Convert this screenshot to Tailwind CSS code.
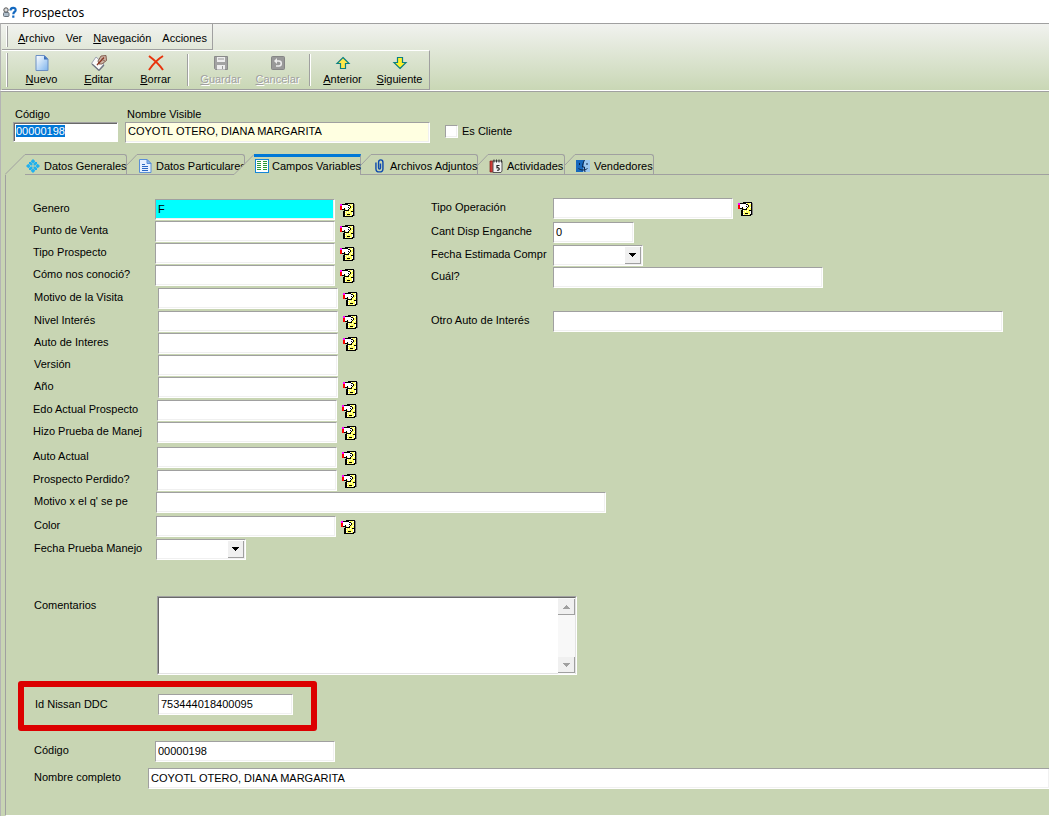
<!DOCTYPE html>
<html lang="es">
<head>
<meta charset="utf-8">
<title>Prospectos</title>
<script src="https://cdn.jsdelivr.net/npm/@tailwindcss/browser@4"></script>
</head>
<body class="min-h-screen flex flex-col bg-[#c8d5b3] font-['Liberation_Sans',Arial,sans-serif] text-[11px] leading-4 text-black overflow-x-hidden">

<svg class="hidden">
  <symbol id="lookup" viewBox="0 0 15 15" shape-rendering="crispEdges">
    <path fill="#808080" d="M14 1h1v12h-1z"/>
    <path fill="#000" d="M5 0h9v13h-1v1H3V8h1V1h1z"/>
    <path fill="#ffff60" d="M5 1h8v7H5zM5 8h7v5H5z"/>
    <path fill="#fff" d="M6 1h1v1H6zM8 1h1v1H8zM12 1h1v1h-1zM11 2h1v1h-1zM12 5h1v1h-1zM11 6h1v1h-1zM5 8h1v1H5zM7 9h1v1H7zM9 8h1v1H9zM5 12h1v1H5zM10 12h1v1h-1zM5 10h1v1H5zM12 9h1v3h-1z"/>
    <path fill="#000" d="M4 1h4v1H4zM2 1h3v1H2zM8 2h2v1H8zM10 3h1v2h-1zM9 5h1v1H9zM8 6h1v2H8zM5 7h3v1H5zM4 5h1v3H4zM2 6h2v1H2zM7 11h3v1H7zM11 8h1v1h-1z"/>
    <path fill="#fff" d="M2 2h6v1h2v2H9v1H8v1H6V6H5V5H4v1H2z"/>
    <path fill="#000" d="M8 4h1v1H8z"/>
    <path fill="#f00" d="M0 3h2v4H0z"/><path fill="#f0f" d="M0 1h2v2H0z"/>
  </symbol>
  <symbol id="down" viewBox="0 0 7 4" shape-rendering="crispEdges"><path fill="currentColor" d="M0 0h7v1H0zM1 1h5v1H1zM2 2h3v1H2zM3 3h1v1H3z"/></symbol>
  <symbol id="slant" viewBox="0 0 20 21"><path d="M0 20.5L20 .5V21H0z" fill="#c8d5b3"/><path d="M0 20.5L20 .5" stroke="#a0a0a0" fill="none"/></symbol>
  <symbol id="slant-short" viewBox="0 0 10 21"><path d="M0 11L10 .5" stroke="#a0a0a0" fill="none"/></symbol>
</svg>

<header class="bg-white h-[23px] flex items-center gap-[5px] pl-[3px] pt-[2px] text-[12px] font-['Noto_Sans','Open_Sans',sans-serif]">
  <svg class="w-[14px] h-[14px]" viewBox="0 0 14 14"><circle cx="3" cy="4" r="2.2" fill="#dcdcdc" stroke="#555"/><rect x=".5" y="6.500" width="5.500" height="4" rx="1" fill="#aebdca" stroke="#66707a"/><path d="M7.500 4.500C7.500 1 13 1 12.600 4.200 12.300 6 10.300 6 10.300 8.200M10.300 9.600v2.200" fill="none" stroke="#1469c0" stroke-width="2.200"/></svg>
  <h1>Prospectos</h1>
</header>

<div class="border-t border-t-[#a0a0a0] border-b border-b-white border-l border-l-[#b4b4b4] bg-linear-to-b from-[#f1f2ef] to-[#c9d7b5] h-[68px] flex flex-col items-start pl-px">
  <nav class="h-[26px] w-[211px] flex items-center gap-[11px] pl-1 border-r border-b border-r-[#a0a0a0] border-b-[#a0a0a0] [&_a]:pt-[3px]">
    <span class="w-[2px] h-[21px] border-l border-l-white bg-[#a0a0a0] -mr-px"></span>
    <a href="#"><u>A</u>rchivo</a><a href="#">Ver</a><a href="#"><u>N</u>avegación</a><a href="#">Acciones</a>
  </nav>
  <div class="h-[40px] w-[428px] flex items-center border-t border-t-white border-r border-b border-r-[#a0a0a0] border-b-[#a0a0a0] pl-1 [&_button]:w-[57px] [&_button]:flex [&_button]:flex-col [&_button]:items-center [&_button]:pt-[2px] [&_svg]:size-4">
    <span class="w-[2px] h-[34px] border-l border-l-white bg-[#a0a0a0] mr-[5px]"></span>
    <button type="button"><svg viewBox="0 0 16 16"><defs><linearGradient id="pg" x2="1" y2="1"><stop stop-color="#fff"/><stop offset="1" stop-color="#7db4ee"/></linearGradient></defs><path d="M2 .5h8.500l3.500 3.500v11.500H2z" fill="url(#pg)" stroke="#6b8fc4"/><path d="M10 .5v4h4z" fill="#3c6fb8"/></svg><span><u>N</u>uevo</span></button>
    <button type="button"><svg viewBox="0 0 16 16"><path d="M5 2L.5 8.500 8 15l5-6z" fill="#fafafa" stroke="#8a90a4" stroke-width=".8"/><path d="M1 9l7 6.500L13 10" fill="none" stroke="#6f7480" stroke-width="1.200"/><path d="M7 6l3-5 5-.5.500 5L11 9H8z" fill="#cdb3a4" stroke="#7b5546" stroke-width=".9"/><path d="M6 10L13 2.500" stroke="#8a3420" stroke-width="1.300"/><path d="M10 4l4 2" stroke="#7b5546" stroke-width=".8"/></svg><span><u>E</u>ditar</span></button>
    <button type="button"><svg viewBox="0 0 16 16"><path d="M1 1c4 3 10 8 14 14M15 1C10 4 5 9 1 15" fill="none" stroke="#e8330c" stroke-width="2"/></svg><span><u>B</u>orrar</span></button>
    <span class="w-[2px] h-8 bg-[#a0a0a0] border-r border-white mx-[3px]"></span>
    <button type="button" disabled class="text-[#a0a0a0] [text-shadow:1px_1px_0_#fff]"><svg viewBox="0 0 16 16"><path d="M1.500 1.500h13v13h-12l-1-1z" fill="#a3a3a3" stroke="#8a8a8a"/><path d="M4 2h8v5H4zM4 10h8v4.500H4z" fill="#eee"/><path d="M5 4h6M9.500 11v3" stroke="#999" stroke-width="1"/></svg><span><u>G</u>uardar</span></button>
    <button type="button" disabled class="text-[#a0a0a0] [text-shadow:1px_1px_0_#fff]"><svg viewBox="0 0 16 16"><rect x="1.500" y="1.500" width="13" height="13" rx="1" fill="#999" stroke="#858585"/><path d="M5 6h4c3 0 3 5 0 5H6" fill="none" stroke="#eee" stroke-width="1.500"/><path d="M7 3L4 6l3 3z" fill="#eee"/></svg><span><u>C</u>ancelar</span></button>
    <span class="w-[2px] h-8 bg-[#a0a0a0] border-r border-white mx-[3px]"></span>
    <button type="button"><svg viewBox="0 0 16 16"><path d="M8 2.500l6 6h-3.500v5h-5v-5H2z" fill="#ffe84a" stroke="#0b8080" stroke-width="1.200"/></svg><span><u>A</u>nterior</span></button>
    <button type="button"><svg viewBox="0 0 16 16"><path d="M8 13.500l6-6h-3.500v-5h-5v5H2z" fill="#fff02a" stroke="#0b8080" stroke-width="1.200"/></svg><span><u>S</u>iguiente</span></button>
  </div>
</div>

<main class="flex-1 flex flex-col border-t border-[#a0a0a0] border-l border-l-[#b4b4b4] bg-[#c8d5b3]">
  <form class="flex-1 flex flex-col">
  <div class="flex items-start gap-[7px] pl-3 pt-[14px] h-[62px]">
    <div class="flex flex-col"><label for="cod" class="pl-[2px]">Código</label>
      <input id="cod" value="00000198" class="w-[105px] h-[20px] bg-white px-[2px] pb-[2px] border border-[#a0a0a0] border-r-white border-b-white shadow-[inset_1px_1px_0_#696969] outline-none selection:bg-[#0078d7] selection:text-white"></div>
    <div class="flex flex-col"><label for="vis" class="pl-[2px]">Nombre Visible</label>
      <input id="vis" readonly value="COYOTL OTERO, DIANA MARGARITA" class="w-[305px] h-[21px] bg-[#ffffe1] px-[2px] pb-[3px] border border-[#a0a0a0] border-r-white border-b-white shadow-[inset_-1px_-1px_0_#f0f0f0]"></div>
    <label class="flex items-center gap-1 pt-[17px] pl-2"><input type="checkbox" class="appearance-none size-[13px] bg-white border border-[#a0a0a0] border-r-white border-b-white shadow-[inset_-1px_-1px_0_#f0f0f0]">Es Cliente</label>
  </div>

  <div role="tablist" class="ml-[4px] h-[21px] flex border-b border-[#a0a0a0] [&>button]:flex [&>button]:h-[20px] [&_span]:flex [&_span]:items-center [&_span]:gap-1 [&_span]:pl-px [&_span]:pt-[2px] [&_span]:border-t [&_span]:border-r [&_span]:border-[#a0a0a0] [&_span]:rounded-tr-[3px] [&_span]:h-[20px] [&_span]:whitespace-nowrap [&_span>svg]:size-[14px] [&_span>svg]:shrink-0">
    <button type="button" role="tab"><svg class="w-5 h-[21px]"><use href="#slant"/></svg><span class="w-[102px]"><svg viewBox="0 0 14 14" fill="#1fb0ee"><path d="M7 0l2.300 2.300L7 4.600 4.700 2.300zM7 14l2.300-2.300L7 9.400l-2.300 2.300zM0 7l2.300-2.300L4.600 7 2.300 9.300zM14 7l-2.300-2.300L9.400 7l2.300 2.300z"/><path d="M3 3h2l1.500 1.500v2H5L3 5zM11 3H9L7.500 4.500v2H9l2-1.500zM3 11h2l1.500-1.500v-2H5L3 9zM11 11H9L7.500 9.500v-2H9l2 1.500z"/></svg>Datos Generales</span></button>
    <button type="button" role="tab"><svg class="w-[10px] h-[21px]"><use href="#slant-short"/></svg><span class="w-[108px]"><svg viewBox="0 0 14 14"><path d="M1.500 .5h7.500l4 4v9h-11.500z" fill="#e6f1ff" stroke="#5b8fd6"/><path d="M9 .5v4h4z" fill="#8db8ee" stroke="#5b8fd6"/><path d="M4 5.500h3M4 7.500h6M4 9.500h6M4 11.500h6" stroke="#2a68c4"/></svg>Datos Particulares</span></button>
    <button type="button" role="tab" aria-selected="true" class="relative -ml-[11px]"><svg class="w-5 h-[21px] shrink-0"><use href="#slant"/></svg><div class="w-[107px] h-[21px] flex items-center gap-[3px] pl-px border-t-[3px] border-t-[#0078d7] border-r border-r-[#a0a0a0] bg-[#c8d5b3] whitespace-nowrap"><svg class="size-[14px] shrink-0" viewBox="0 0 14 14" shape-rendering="crispEdges"><path fill="#1486d8" d="M0 0h14v14H0z"/><path fill="#fff" d="M1 1h12v12H1z"/><path fill="#2a9a38" d="M2 2h4v1H2zM2 4h4v1H2zM2 6h4v1H2zM2 8h4v1H2zM2 10h4v1H2zM8 2h4v1H8zM8 4h4v1H8zM8 6h4v1H8zM8 8h4v1H8zM8 10h4v1H8z"/></svg>Campos Variables</div></button>
    <button type="button" role="tab"><svg class="w-[10px] h-[21px]"><use href="#slant-short"/></svg><span class="w-[107px]"><svg viewBox="0 0 14 16" fill="none"><path d="M3.500 4v7c0 5 8 5 8 0V4c0-4-5-4-5 0v6c0 2 2.200 2 2.200 0V5" stroke="#0b49ae" stroke-width="1.600"/></svg>Archivos Adjuntos</span></button>
    <button type="button" role="tab"><svg class="w-[10px] h-[21px]"><use href="#slant-short"/></svg><span class="w-[77px]"><svg viewBox="0 0 14 14"><path d="M1 2h4v11H1z" fill="#d23a35" stroke="#7c1d1b" stroke-width=".7"/><path d="M4 2h9v10l-1 1.500H4z" fill="#f2f2f2" stroke="#555"/><path d="M5 .5v3M7.500 .5v3M10 .5v3M12.500 .5v3" stroke="#333"/><path d="M10.500 6.500H8v2.200c3-.6 3 3 0 2.500" fill="none" stroke="#222" stroke-width="1.200"/></svg>Actividades</span></button>
    <button type="button" role="tab"><svg class="w-[10px] h-[21px]"><use href="#slant-short"/></svg><span class="w-[79px]"><svg viewBox="0 0 14 14"><path d="M0 1h8v12H0z" fill="#1768bd"/><path d="M8 1h6v12H7z" fill="#9cc7ef"/><path d="M8.500 1C7 4 6.500 6 6.500 8h2c0 2 0 3 .5 5M2.500 9.500c3 2 6 2 9 0M3.500 4v2M11 4v2" fill="none" stroke="#0b2347"/></svg>Vendedores</span></button>
  </div>

  <section class="flex-1 ml-[4px] border-l border-[#a0a0a0] border-b border-b-white pt-6 pb-[26px] flex flex-col [&_label]:shrink-0 [&_label]:leading-[18px] [&_label]:whitespace-nowrap [&_.f]:h-[21px] [&_.f]:shrink-0 [&_.f]:bg-white [&_.f]:px-[2px] [&_.f]:pb-[2px] [&_.f]:border [&_.f]:border-[#a0a0a0] [&_.f]:border-r-white [&_.f]:border-b-white [&_.f]:shadow-[inset_-1px_-1px_0_#f0f0f0] [&_.r]:flex [&_.r]:items-start [&_.r>button]:ml-[5px] [&_.r>button]:mt-1 [&_.r>button>svg]:size-[15px]">
    <div class="flex items-start">
      <div class="w-[398px] shrink-0 ml-[27px] flex flex-col">
        <div class="[&_label]:w-[122px] [&_.r]:h-[22px]">
          <div class="r"><label for="a1">Genero</label><input id="a1" value="F" class="f w-[180px] bg-[#00ffff]!"><button type="button" aria-label="Buscar género"><svg><use href="#lookup"/></svg></button></div>
          <div class="r"><label for="a2">Punto de Venta</label><input id="a2" class="f w-[180px]"><button type="button" aria-label="Buscar punto de venta"><svg><use href="#lookup"/></svg></button></div>
          <div class="r"><label for="a3">Tipo Prospecto</label><input id="a3" class="f w-[180px]"><button type="button" aria-label="Buscar tipo"><svg><use href="#lookup"/></svg></button></div>
          <div class="r"><label for="a4">Cómo nos conoció?</label><input id="a4" class="f w-[180px]"><button type="button" aria-label="Buscar medio"><svg><use href="#lookup"/></svg></button></div>
        </div>
        <div class="pl-px [&_label]:w-[124px] pt-px">
          <div class="r h-[23px]"><label for="a5">Motivo de la Visita</label><input id="a5" class="f w-[180px]"><button type="button" aria-label="Buscar motivo"><svg><use href="#lookup"/></svg></button></div>
          <div class="r h-[22px]"><label for="a6">Nivel Interés</label><input id="a6" class="f w-[180px]"><button type="button" aria-label="Buscar nivel"><svg><use href="#lookup"/></svg></button></div>
          <div class="r h-[22px]"><label for="a7">Auto de Interes</label><input id="a7" class="f w-[180px]"><button type="button" aria-label="Buscar auto"><svg><use href="#lookup"/></svg></button></div>
          <div class="r h-[22px]"><label for="a8">Versión</label><input id="a8" class="f w-[180px]"></div>
          <div class="r h-[23px]"><label for="a9">Año</label><input id="a9" class="f w-[180px]"><button type="button" aria-label="Buscar año"><svg><use href="#lookup"/></svg></button></div>
        </div>
        <div class="[&_label]:w-[124px]">
          <div class="r h-[22px]"><label for="b1">Edo Actual Prospecto</label><input id="b1" class="f w-[180px]"><button type="button" aria-label="Buscar estado"><svg><use href="#lookup"/></svg></button></div>
          <div class="r h-[25px]"><label for="b2">Hizo Prueba de Manej</label><input id="b2" class="f w-[180px]"><button type="button" aria-label="Buscar prueba"><svg><use href="#lookup"/></svg></button></div>
          <div class="r h-[23px]"><label for="b3">Auto Actual</label><input id="b3" class="f w-[180px]"><button type="button" aria-label="Buscar auto actual"><svg><use href="#lookup"/></svg></button></div>
          <div class="r h-[22px]"><label for="b4">Prospecto Perdido?</label><input id="b4" class="f w-[180px]"><button type="button" aria-label="Buscar perdido"><svg><use href="#lookup"/></svg></button></div>
        </div>
        <div class="pl-px [&_label]:w-[122px]">
          <div class="r h-[24px]"><label for="c1">Motivo x el q' se pe</label><input id="c1" class="f w-[450px]"></div>
          <div class="r h-[23px]"><label for="c2">Color</label><input id="c2" class="f w-[180px]"><button type="button" aria-label="Buscar color"><svg><use href="#lookup"/></svg></button></div>
          <div class="r"><label for="c3">Fecha Prueba Manejo</label><div class="relative"><select id="c3" class="f block appearance-none w-[90px]"></select><span class="pointer-events-none absolute right-[2px] top-[2px] w-4 h-[17px] bg-[#f0f0f0] border-r border-b border-[#a0a0a0] flex items-center justify-center"><svg class="w-[7px] h-1"><use href="#down"/></svg></span></div></div>
        </div>
      </div>
      <div class="flex-1 min-w-0 flex flex-col -mt-px [&_label]:w-[122px]">
        <div class="r h-[24px]"><label for="d1">Tipo Operación</label><input id="d1" class="f w-[180px]"><button type="button" aria-label="Buscar operación"><svg><use href="#lookup"/></svg></button></div>
        <div class="r h-[23px]"><label for="d2">Cant Disp Enganche</label><input id="d2" value="0" class="f w-[81px]"></div>
        <div class="r h-[22px]"><label for="d3">Fecha Estimada Compr</label><div class="relative"><select id="d3" class="f block appearance-none w-[90px]"></select><span class="pointer-events-none absolute right-[2px] top-[2px] w-4 h-[17px] bg-[#f0f0f0] border-r border-b border-[#a0a0a0] flex items-center justify-center"><svg class="w-[7px] h-1"><use href="#down"/></svg></span></div></div>
        <div class="r h-[44px]"><label for="d4">Cuál?</label><input id="d4" class="f w-[270px]"></div>
        <div class="r"><label for="d5">Otro Auto de Interés</label><input id="d5" class="f w-[450px]"></div>
      </div>
    </div>

    <div class="flex items-start ml-7 mt-9 h-[79px]">
      <label for="com" class="w-[123px]">Comentarios</label>
      <div class="w-[420px] h-[79px] flex bg-white border border-[#a0a0a0] border-r-white border-b-white">
        <textarea id="com" class="flex-1 resize-none border border-[#696969] border-r-0 border-b-[#e3e3e3] outline-none px-1"></textarea>
        <div class="w-[18px] flex flex-col justify-between py-px border-r border-t border-t-[#696969] border-r-[#e3e3e3] bg-[#f8f8f8] text-[#a0a0a0] [&_button]:h-4 [&_button]:bg-[#f0f0f0] [&_button]:border-r [&_button]:border-b [&_button]:border-[#a0a0a0] [&_button]:flex [&_button]:items-center [&_button]:justify-center">
          <button type="button" aria-label="Subir"><svg class="w-[7px] h-1 rotate-180"><use href="#down"/></svg></button>
          <button type="button" aria-label="Bajar"><svg class="w-[7px] h-1"><use href="#down"/></svg></button>
        </div>
      </div>
    </div>

    <div class="r ml-3 mt-[6px] w-[299px] h-[50px] border-6 border-[#dc0000] rounded-[3px] pl-[11px] pt-[7px]">
      <label for="idn" class="w-[123px] pt-px">Id Nissan DDC</label><input id="idn" value="753444018400095" class="f w-[135px]">
    </div>
    <div class="r ml-7 mt-[10px]"><label for="cd2" class="w-[121px]">Código</label><input id="cd2" value="00000198" class="f w-[180px]"></div>
    <div class="r ml-7 mt-[6px]"><label for="nc" class="w-[114px]">Nombre completo</label><input id="nc" value="COYOTL OTERO, DIANA MARGARITA" class="f flex-1 border-r-0!"></div>
  </section>
  </form>
</main>
<script>
  const code = document.getElementById('cod');
  code.focus();
  code.select();
</script>
</body>
</html>
